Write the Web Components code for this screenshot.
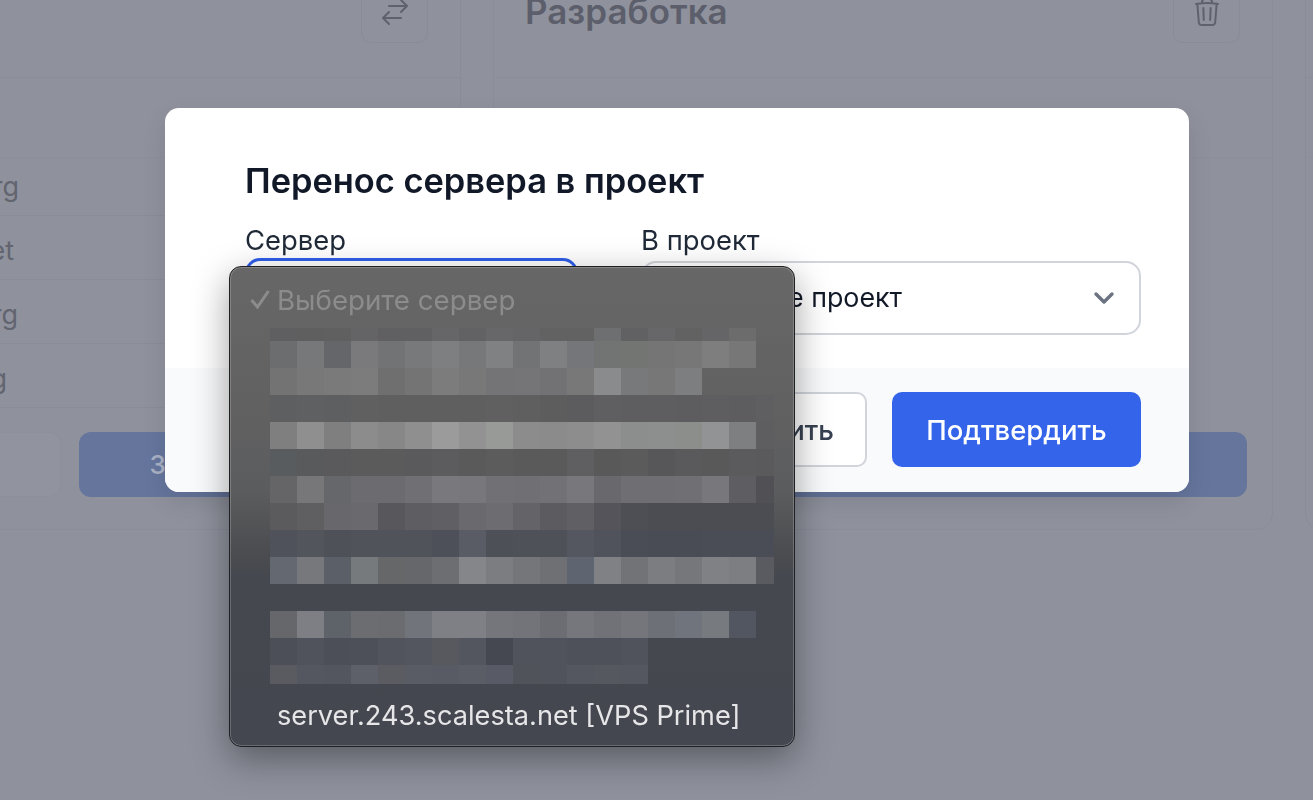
<!DOCTYPE html>
<html lang="ru">
<head>
<meta charset="utf-8">
<title>Перенос сервера в проект</title>
<style>
  html, body { margin: 0; height: 100%; overflow: hidden; background: #8f929d; }
  body { font-family: Inter, "Liberation Sans", sans-serif; }
</style>
</head>
<body>
<app-backdrop>
  <project-card secondary-width="354">
    <svg slot="action" viewBox="0 0 24 24"><path d="M7.5 21 3 16.5m0 0L7.5 12M3 16.5h13.5m0-13.5L21 7.5m0 0L16.5 12M21 7.5H7.5"/></svg>
    <host-row end="17">rg</host-row>
    <host-row end="12">et</host-row>
    <host-row end="16">rg</host-row>
    <host-row end="5">g</host-row>
    <span slot="primary">Заказать сервер</span>
  </project-card>
  <project-card title-text="Разработка" secondary-width="240">
    <svg slot="action" viewBox="0 0 24 24"><path d="m14.74 9-.346 9m-4.788 0L9.26 9m9.968-3.21c.342.052.682.107 1.022.166m-1.022-.165L18.16 19.673a2.25 2.25 0 0 1-2.244 2.077H8.084a2.25 2.25 0 0 1-2.244-2.077L4.772 5.79m14.456 0a48.108 48.108 0 0 0-3.478-.397m-12 .562c.34-.059.68-.114 1.022-.165m0 0a48.11 48.11 0 0 1 3.478-.397m7.5 0v-.916c0-1.18-.91-2.164-2.09-2.201a51.964 51.964 0 0 0-3.32 0c-1.18.037-2.09 1.022-2.09 2.201v.916m7.5 0a48.667 48.667 0 0 0-7.5 0"/></svg>
  </project-card>
  <project-card></project-card>
</app-backdrop>

<move-modal heading="Перенос сервера в проект">
  <form-select label="Сервер" focused style="width:333px">
    <native-menu slot="menu"></native-menu>
  </form-select>
  <form-select label="В проект" value="Выберите проект" style="width:500px"></form-select>
  <modal-button slot="footer">Отменить</modal-button>
  <modal-button slot="footer" primary>Подтвердить</modal-button>
</move-modal>

<script>
class AppBackdrop extends HTMLElement {
  constructor() {
    super();
    this.attachShadow({ mode: "open" });
    this.shadowRoot.innerHTML = `
      <style>
      :host {
        display: grid;
        grid-template-columns: repeat(3, 780px);
        gap: 32px;
        margin: -76px 0 0 -319px;
      }
      </style>
      <slot></slot>
    `;
  }
}

class ProjectCard extends HTMLElement {
  constructor() {
    super();
    const title = this.getAttribute("title-text") || "";
    const secondaryWidth = this.getAttribute("secondary-width") || 354;
    this.attachShadow({ mode: "open" });
    this.shadowRoot.innerHTML = `
      <style>
      :host {
        display: flex;
        flex-flow: column;
        height: 606px;
        box-sizing: border-box;
        border: 1px solid #8a8d99;
        border-radius: 16px;
      }
      .header {
        height: 153px;
        flex: none;
        box-sizing: border-box;
        display: flex;
        align-items: flex-end;
        justify-content: space-between;
        padding: 0 32px 34px 31px;
        border-bottom: 1px solid #8a8d99;
      }
      .title {
        font-size: 35px;
        line-height: 42px;
        font-weight: 600;
        color: #5c5f6b;
        margin-bottom: 11px;
      }
      .action {
        width: 67px;
        height: 63px;
        box-sizing: border-box;
        display: flex;
        align-items: center;
        justify-content: center;
        border: 1px solid #898c98;
        border-radius: 10px;
        color: #5f626e;
      }
      ::slotted(svg) {
        width: 32px;
        height: 32px;
        fill: none;
        stroke: currentColor;
        stroke-width: 1.5;
        stroke-linecap: round;
        stroke-linejoin: round;
      }
      .list {
        height: 256px;
        flex: none;
        margin: 74px 0 0;
        background: linear-gradient(#8c8f9b, #8c8f9b) 0 5px / 100% 1px no-repeat;
      }
      .footer {
        display: flex;
        gap: 18px;
        padding: 24px 25px 0 25px;
      }
      .secondary {
        width: ${secondaryWidth}px;
        flex: none;
        height: 65px;
        border-radius: 12px;
        background: #91949f;
        border: 1px solid #8d909c;
        box-sizing: border-box;
      }
      .primary {
        flex: auto;
        height: 65px;
        border-radius: 12px;
        background: #65759c;
        display: flex;
        align-items: center;
        justify-content: center;
        color: #a9b0c4;
        font-size: 26px;
        font-weight: 500;
      }
      </style>
      <div class="header">
        <span class="title">${title}</span>
        <div class="action"><slot name="action"></slot></div>
      </div>
      <div class="list"><slot></slot></div>
      <div class="footer">
        <div class="secondary"></div>
        <div class="primary"><slot name="primary"></slot></div>
      </div>
    `;
  }
}

class HostRow extends HTMLElement {
  constructor() {
    super();
    const end = Number(this.getAttribute("end") || 0);
    this.attachShadow({ mode: "open" });
    this.shadowRoot.innerHTML = `
      <style>
      :host {
        display: block;
        width: 780px;
        height: 64px;
        box-sizing: border-box;
        border-bottom: 1px solid #8a8d99;
        font-size: 27px;
        line-height: 70px;
        color: #62656f;
      }
      .text { display: block; width: ${end + 320}px; text-align: right; }
      </style>
      <span class="text"><slot></slot></span>
    `;
  }
}

class MoveModal extends HTMLElement {
  constructor() {
    super();
    this.attachShadow({ mode: "open" });
    this.shadowRoot.innerHTML = `
      <style>
      :host {
        position: fixed;
        left: 165px;
        top: 108px;
        width: 1024px;
        height: 384px;
        display: flex;
        flex-flow: column;
        background: #fff;
        border-radius: 14px;
        box-shadow: 0 10px 25px rgba(0, 0, 0, 0.1);
      }
      .content {
        height: 260px;
        box-sizing: border-box;
        padding: 52px 48px 0 80px;
      }
      h2 {
        margin: 0 0 20px;
        font-size: 34.4px;
        line-height: 42px;
        font-weight: 600;
        color: #111827;
      }
      .fields { display: flex; gap: 63px; }
      .footer {
        flex: auto;
        display: flex;
        justify-content: flex-end;
        gap: 25px;
        padding: 24px 48px 0 0;
        background: #f9fafb;
        border-radius: 0 0 14px 14px;
      }
      </style>
      <div class="content">
        <h2>${this.getAttribute("heading")}</h2>
        <div class="fields"><slot></slot></div>
      </div>
      <div class="footer"><slot name="footer"></slot></div>
    `;
  }
}

class FormSelect extends HTMLElement {
  constructor() {
    super();
    const focused = this.hasAttribute("focused");
    this.attachShadow({ mode: "open" });
    this.shadowRoot.innerHTML = `
      <style>
      :host {
        display: block;
        position: relative;
        flex: none;
      }
      label {
        display: block;
        font-size: 27.4px;
        line-height: 36px;
        margin-bottom: 3px;
        color: #1f2937;
      }
      .box {
        height: 74px;
        box-sizing: border-box;
        display: flex;
        align-items: center;
        justify-content: space-between;
        padding: 0 24px 2px 32px;
        border: 2px solid #d1d5db;
        border-radius: 15px;
        background: #fff;
        font-size: 26.8px;
        color: #111827;
      }
      .focused {
        height: 77px;
        margin-top: -3px;
        border: 3px solid #2f5fe8;
      }
      svg { width: 22px; height: 22px; margin-top: 2px; fill: none; stroke: #6b7280; stroke-width: 3.4; stroke-linecap: round; stroke-linejoin: round; }
      </style>
      <label>${this.getAttribute("label")}</label>
      <div class="box ${focused ? "focused" : ""}">
        <span>${this.getAttribute("value") || ""}</span>
        <svg viewBox="0 0 22 22"><path d="M3 7l8 8 8-8"/></svg>
      </div>
      <slot name="menu"></slot>
    `;
  }
}

class ModalButton extends HTMLElement {
  constructor() {
    super();
    this.attachShadow({ mode: "open" });
    this.shadowRoot.innerHTML = `
      <style>
      :host {
        display: flex;
        align-items: center;
        justify-content: center;
        height: 75px;
        box-sizing: border-box;
        padding: 0 31px;
        border: 2px solid #d1d5db;
        border-radius: 10px;
        background: #fff;
        color: #374151;
        font-size: 27.5px;
        font-weight: 500;
      }
      :host([primary]) {
        width: 249px;
        padding: 0;
        border: none;
        background: #3464ea;
        color: #fff;
      }
      </style>
      <slot></slot>
    `;
  }
}

// размытый список серверов: значения серого по строкам
const MOSAIC = [
  [13, "5f5f61 605f60 606061 646466 606062 606062 666668 626264 676769 656567 626263 626263 6e6f71 616163 676769 626263 656567 6c6c6d"],
  [27, "6c6d6f 777879 65666a 7a7a7c 727375 78797a 7e7f80 77787a 808183 727375 7f8081 75767a 727473 737573 757575 777777 7e7e7e 777777"],
  [27, "737373 787878 7a7a7a 7c7c7c 6f6f6f 747474 7c7c7c 787878 747476 757577 727274 787879 8a8b8c 78797a 777777 7d7e80"],
  [27, "5d5f60 5e6061 5e5f60 606061 5f5f60 5f5f60 5f5f60 5f5f5f 606061 5f5f60 5d5d5e 5c5c5e 5f5f61 5e5e60 5e5e60 5d5d5f 5e5e60 5d5d5f 5f5f61"],
  [27, "7f7f80 8f8f90 7f7f80 8c8c8d 878788 8f8f90 9b9b9c 929293 989a98 8c8c8d 8a8b8a 8c8d8c 929293 8c8d8d 8d8e8e 8c8e8c 929394 7e7f80 5e5e60"],
  [27, "585c5f 595a5b 5a5a5c 5b5b5c 5b5b5b 5a5a5c 5c5c5e 5a5a5b 5c5c5d 5a5a5b 5a5a5b 5f5f62 59595a 5b5b5c 57575a 5a5a5d 59595a 5b5b5e 5a5a5d"],
  [27, "656568 77777a 66676a 6c6c70 6c6c70 707074 79797d 78787c 717175 707074 727276 78787c 69696d 6f6f73 6f6f73 707074 78787c 5e5e62 505055"],
  [27, "5b5b5e 5f5f62 68686c 6a6a6e 58585c 5e5e62 606064 6a6a6e 6d6d71 646468 5c5c60 606064 54545a 4e4e55 4c4d52 4c4d52 4c4d52 4c4d52 4c4d52"],
  [27, "4f525a 52555c 4e5158 50535a 50535a 50535a 4e5059 595c65 4e5058 4f5159 4f5159 545760 50535c 4a4d55 494c54 494c54 4a4d55 4a4d55 4a4d55"],
  [27, "646870 77787c 5a5f68 777a7c 666769 66676a 6d6e72 85868a 7c7d81 75767a 6f7074 5f6570 808185 727377 7c7d81 76777b 808185 7d7e82 5a5b60"],
  [27, ""],
  [27, "66676a 7e7f84 5e636a 6c6d71 6b6c70 71747a 7f8085 7f8085 75767c 73747a 6c6d72 76777c 717277 75767b 6e7078 70747c 777b80 525660"],
  [27, "4c4f57 50535b 4c4f57 4d5058 51545c 53565e 58595f 53565e 454850 50535b 50535b 4e5159 4e5159 50535b"],
  [19, "5a5b60 54575f 53565e 5d6068 5a5c62 595c64 585b63 5a5d65 585b65 505359 50535b 54575f 55585f 54575f"],
];

class PixelMosaic extends HTMLElement {
  constructor() {
    super();
    this.attachShadow({ mode: "open" });
    const rows = MOSAIC.map(([height, cells]) => {
      const spans = cells.split(" ").filter(Boolean)
        .map((c) => `<i style="background:#${c}"></i>`).join("");
      return `<div class="row" style="height:${height}px">${spans}</div>`;
    }).join("");
    this.shadowRoot.innerHTML = `
      <style>
      :host { display: block; }
      .row { display: flex; }
      i { flex: none; width: 27px; }
      i:nth-child(19) { width: 18px; }
      </style>
      ${rows}
    `;
  }
}

class NativeMenu extends HTMLElement {
  constructor() {
    super();
    this.attachShadow({ mode: "open" });
    this.shadowRoot.innerHTML = `
      <style>
      :host {
        position: absolute;
        z-index: 10;
        left: -16px;
        top: 44px;
        width: 566px;
        height: 481px;
        box-sizing: border-box;
        display: flex;
        flex-flow: column;
        border: 1px solid #1f2023;
        border-radius: 12px;
        background: linear-gradient(#676767 0%, #606061 34%, #5b5c5e 47%, #4c4d50 59%, #45484f 65%, #44474f 100%);
        box-shadow: inset 0 0 0 1px rgba(255, 255, 255, 0.2), 0 12px 36px rgba(0, 0, 0, 0.38);
      }
      .option {
        flex: none;
        display: flex;
        align-items: center;
        padding-left: 47px;
        box-sizing: border-box;
        white-space: nowrap;
      }
      .selected {
        position: relative;
        height: 61px;
        padding-top: 4px;
        font-size: 27.7px;
        color: #8c8c8d;
      }
      .check {
        position: absolute;
        left: 20px;
        top: 22px;
        width: 20px;
        height: 20px;
        fill: none;
        stroke: #8c8c8d;
        stroke-width: 3;
      }
      pixel-mosaic { margin-left: 40px; flex: none; }
      .last {
        height: 62px;
        font-size: 27.2px;
        color: #e6e6e8;
      }
      </style>
      <div class="option selected">
        <svg class="check" viewBox="0 0 20 20"><path d="M1.5 11l6 7L18.5 2"/></svg>
        Выберите сервер
      </div>
      <pixel-mosaic></pixel-mosaic>
      <div class="option last">server.243.scalesta.net [VPS Prime]</div>
    `;
  }
}

customElements.define("app-backdrop", AppBackdrop);
customElements.define("project-card", ProjectCard);
customElements.define("host-row", HostRow);
customElements.define("move-modal", MoveModal);
customElements.define("form-select", FormSelect);
customElements.define("modal-button", ModalButton);
customElements.define("pixel-mosaic", PixelMosaic);
customElements.define("native-menu", NativeMenu);
</script>
</body>
</html>
